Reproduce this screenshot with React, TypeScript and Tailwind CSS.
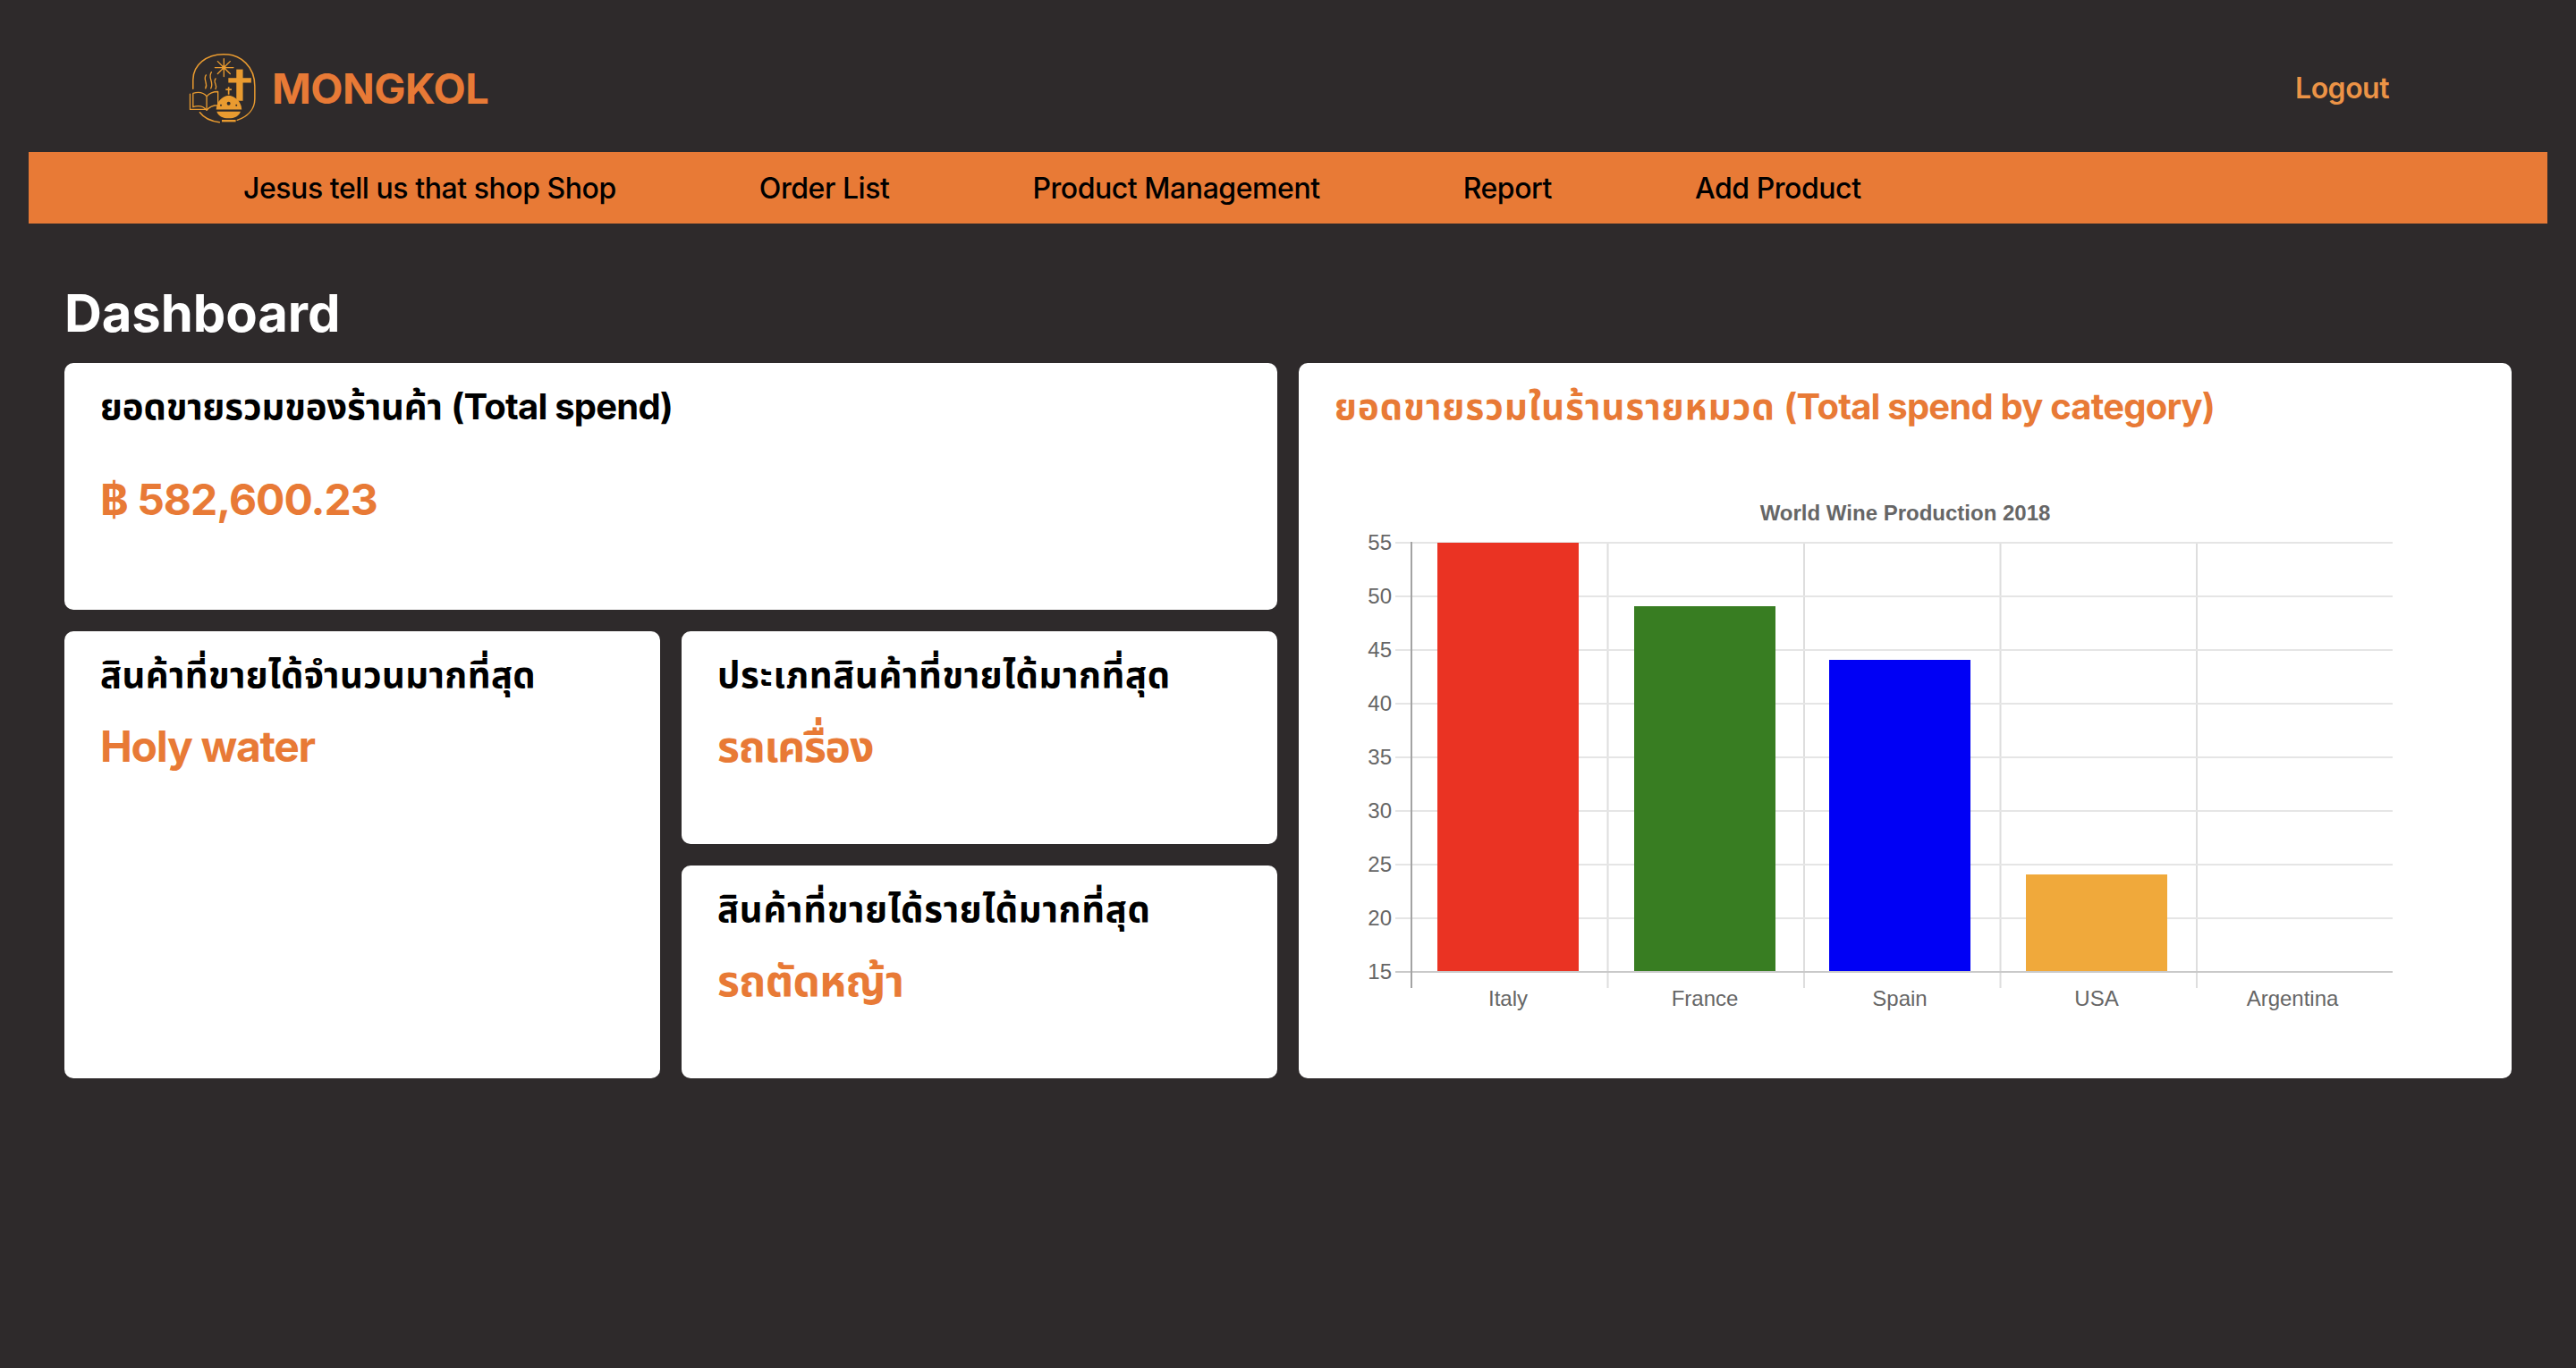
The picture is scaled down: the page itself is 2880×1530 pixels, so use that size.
function Logo() {
  const c = "#e99b30";
  return (
    <svg viewBox="90 85 228 238" className="w-[76px] h-[79px] shrink-0" fill="none" stroke={c} strokeWidth="4.5" strokeLinecap="round">
      <path d="M104 206V176C104 125 150 90 206 90C266 90 312 132 312 198V240C312 275 288 300 253 312" />
      <path d="M127 286C140 304 162 315 193 319" />
      <path d="M208 105V165M178 135H240M187 114L229 156M187 156L229 114" strokeWidth="4" />
      <circle cx="208" cy="135" r="7" fill={c} stroke="none" />
      <path d="M261 141V247" strokeWidth="22" strokeLinecap="butt" />
      <path d="M223 178H300" strokeWidth="16" strokeLinecap="butt" />
      <path d="M148 160C136 176 156 186 146 205M166 150C152 170 176 182 164 205M180 172C170 186 188 192 180 207" strokeWidth="4" />
      <path d="M104 222V268C122 262 140 266 150 279C160 266 172 262 188 262V216C172 216 158 222 150 232C140 220 122 216 104 222ZM150 232V279M94 224V276H150" strokeWidth="4" strokeLinejoin="round" />
      <path d="M182 276C184 248 202 232 224 229C246 232 266 248 268 276Z" fill={c} stroke="none" />
      <path d="M224 200V226M214 209H234" strokeWidth="5" strokeLinecap="butt" />
      <circle cx="224" cy="256" r="6" fill="#2e2a2b" stroke="none" />
      <circle cx="198" cy="262" r="3" fill="#2e2a2b" stroke="none" />
      <circle cx="250" cy="262" r="3" fill="#2e2a2b" stroke="none" />
      <path d="M184 283H264C260 298 244 306 224 306C204 306 188 298 184 283Z" fill={c} stroke="none" />
      <path d="M201 311H248V318H201Z" fill={c} stroke="none" />
    </svg>
  );
}

function Chart() {
  const ox = 1492;
  const oy = 540;
  const xs = [1578, 1797.5, 2017, 2236.5, 2456, 2675];
  const ys = [55, 50, 45, 40, 35, 30, 25, 20, 15];
  const bars = [
    { x: 1607, w: 158, top: 607, fill: "#ea3323", label: "Italy" },
    { x: 1827, w: 158, top: 678, fill: "#387d22", label: "France" },
    { x: 2045, w: 158, top: 738, fill: "#0000f5", label: "Spain" },
    { x: 2265, w: 158, top: 978, fill: "#f0a93b", label: "USA" },
    { x: 2484, w: 158, top: 1087, fill: "#000000", label: "Argentina" },
  ];
  return (
    <svg width="1276" height="620" viewBox={`${ox} ${oy} 1276 620`} className="block mt-[62px]" style={{ fontFamily: '"Liberation Sans", Arial, sans-serif' }}>
      <text x="2130" y="582" textAnchor="middle" fontSize="24" fontWeight="700" fill="#666666">World Wine Production 2018</text>
      {xs.slice(1, 5).map((x) => (
        <line key={x} x1={x} x2={x} y1="606" y2="1105" stroke="#dedede" strokeWidth="2" />
      ))}
      {ys.slice(0, 8).map((v, i) => (
        <line key={v} x1="1560" x2="2675" y1={607 + i * 60} y2={607 + i * 60} stroke="#e5e5e5" strokeWidth="2" />
      ))}
      <line x1="1560" x2="2675" y1="1087" y2="1087" stroke="#c9c9c9" strokeWidth="2" />
      <line x1="1578" x2="1578" y1="606" y2="1105" stroke="#a3a3a3" strokeWidth="2" />
      {ys.map((v, i) => (
        <text key={v} x="1556" y={615 + i * 60} textAnchor="end" fontSize="24" fill="#666666">{v}</text>
      ))}
      {bars.map((b) => (
        <g key={b.label}>
          {b.top < 1087 && <rect x={b.x} y={b.top} width={b.w} height={1086 - b.top} fill={b.fill} />}
          <text x={b.x + b.w / 2} y="1125" textAnchor="middle" fontSize="24" fill="#666666">{b.label}</text>
        </g>
      ))}
    </svg>
  );
}

function Stat({ title, value, h, titleTrack, valueTrack }: { title: string; value: string; h?: string; titleTrack: string; valueTrack: string }) {
  return (
    <div className={`bg-white rounded-[10px] px-10 pt-[26px] ${h ?? ""}`}>
      <div className={`text-[40px] leading-[46px] font-bold text-black ${titleTrack}`}>{title}</div>
      <div className={`mt-[28px] text-[48px] leading-[58px] font-bold text-[#e87a36] ${valueTrack}`}>{value}</div>
    </div>
  );
}

export default function App() {
  return (
    <div
      className="min-h-screen bg-[#2e2a2b] px-8"
      style={{ fontFamily: 'Inter, "Noto Sans Thai", "Noto Sans", "Liberation Sans", sans-serif' }}
    >
      <header className="h-[170px] pt-[26px] flex items-center justify-between pl-[179px] pr-[177px]">
        <div className="flex items-center gap-[17px]">
          <Logo />
          <span className="text-[47px] leading-none font-bold tracking-[-0.5px] text-[#e87a36]">MONGKOL</span>
        </div>
        <a className="pt-[2px] text-[32px] font-semibold tracking-[-0.5px] text-[#ec9346]">Logout</a>
      </header>
      <nav className="h-20 pt-[2px] bg-[#e87a36] flex items-center pl-[160px]">
        {["Jesus tell us that shop Shop", "Order List", "Product Management", "Report", "Add Product"].map((t) => (
          <a key={t} className="px-20 text-[32px] font-medium tracking-[-0.45px] text-black whitespace-nowrap">{t}</a>
        ))}
      </nav>
      <main className="px-10">
        <h1 className="pt-[66px] h-[156px] text-[58px] leading-[68px] font-bold tracking-[-0.1px] text-white">Dashboard</h1>
        <div className="grid grid-cols-2 gap-6">
          <div className="flex flex-col gap-6">
            <div className="h-[276px] bg-white rounded-[10px] px-10 pt-[26px]">
              <div className="text-[40px] leading-[46px] font-bold text-black">
                <span className="tracking-[-0.1px]">ยอดขายรวมของร้านค้า</span> <span className="tracking-[-0.8px]">(Total spend)</span>
              </div>
              <div className="mt-[52px] text-[48px] leading-[58px] font-bold tracking-[-1px] text-[#e87a36]">฿ 582,600.23</div>
            </div>
            <div className="grid grid-cols-2 gap-6 h-[500px]">
              <Stat title="สินค้าที่ขายได้จำนวนมากที่สุด" value="Holy water" titleTrack="tracking-[0.4px]" valueTrack="tracking-[-1.3px]" />
              <div className="flex flex-col gap-6">
                <Stat title="ประเภทสินค้าที่ขายได้มากที่สุด" value="รถเครื่อง" h="flex-1" titleTrack="tracking-[0.65px]" valueTrack="tracking-[-1.2px]" />
                <Stat title="สินค้าที่ขายได้รายได้มากที่สุด" value="รถตัดหญ้า" h="flex-1" titleTrack="tracking-[0.75px]" valueTrack="tracking-[-0.6px]" />
              </div>
            </div>
          </div>
          <div className="bg-white rounded-[10px] px-10 pt-[26px]">
            <div className="text-[40px] leading-[46px] font-bold text-[#e87a36]">
              <span className="tracking-[1.1px]">ยอดขายรวมในร้านรายหมวด</span> <span className="tracking-[-0.8px]">(Total spend by category)</span>
            </div>
            <Chart />
          </div>
        </div>
      </main>
    </div>
  );
}
